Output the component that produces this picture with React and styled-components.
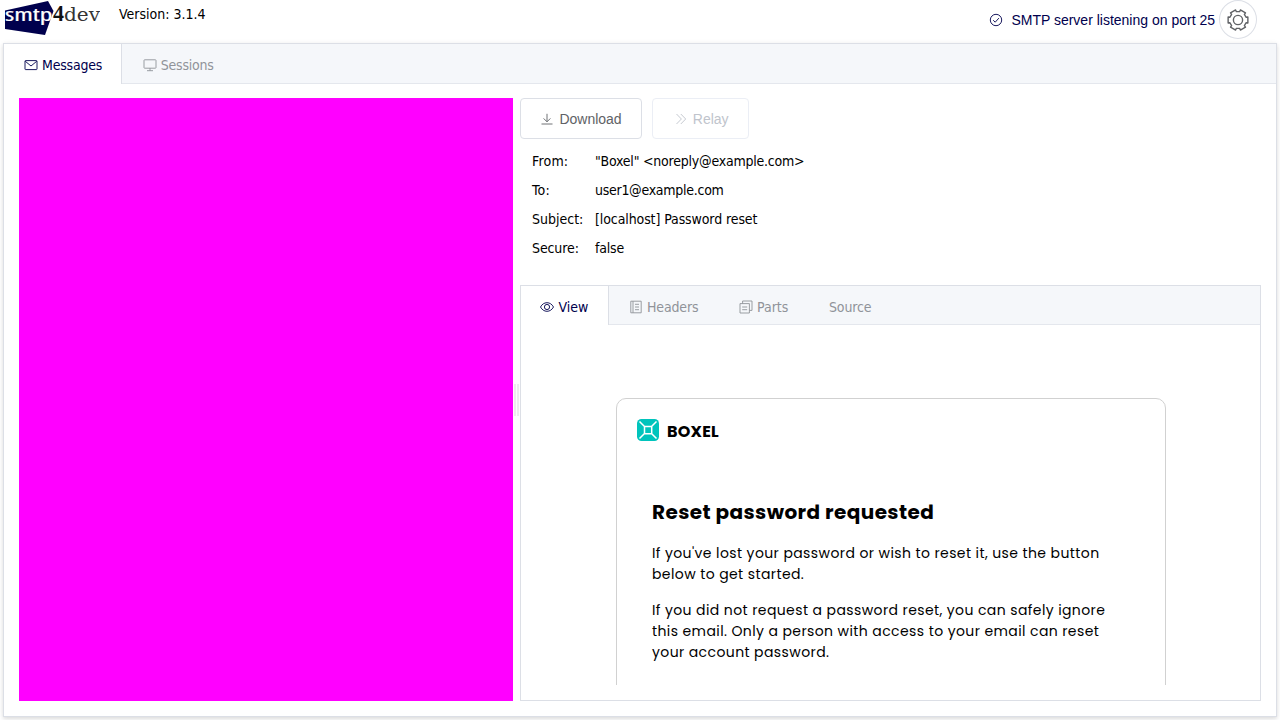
import React from "react";
import styled, { createGlobalStyle } from "styled-components";

const Global = createGlobalStyle`
  * { box-sizing: border-box; }
  html, body { margin: 0; height: 100%; overflow: hidden; background: #fff; }
  body { font-family: Tahoma, "DejaVu Sans Condensed", "DejaVu Sans", sans-serif; font-stretch: condensed; font-size: 14px; color: #000; }
`;

const Page = styled.div`
  height: 720px;
  width: 1280px;
  display: flex;
  flex-direction: column;
  overflow: hidden;
`;

const TopBar = styled.header`
  height: 43px;
  flex: none;
  display: flex;
  align-items: flex-start;
  padding: 0 23px 0 5px;
`;

const Version = styled.span`
  margin: 5px auto 0 19px;
  line-height: 19px;
`;

const Status = styled.div`
  display: flex;
  align-items: center;
  gap: 8.5px;
  height: 39px;
  margin-right: 4px;
  color: #00004d;
  font-family: "Liberation Sans", Arial, sans-serif;
`;

const RoundButton = styled.button`
  width: 38px;
  height: 39px;
  padding: 0;
  border: 1px solid #dcdfe6;
  border-radius: 50%;
  background: #fff;
  color: #606266;
  display: flex;
  align-items: center;
  justify-content: center;
`;

const Panel = styled.main`
  flex: 1;
  margin: 0 3px 3px;
  display: flex;
  flex-direction: column;
  min-height: 0;
  border: 1px solid #dcdfe6;
  background: #fff;
  box-shadow: 0 2px 4px rgba(0, 0, 0, 0.12), 0 0 6px rgba(0, 0, 0, 0.04);
`;

const TabStrip = styled.nav`
  flex: none;
  display: flex;
  height: ${(p) => p.$height}px;
  background: #f5f7fa;
  border-bottom: 1px solid #e4e7ed;
`;

const Tab = styled.div`
  display: flex;
  align-items: center;
  gap: 4px;
  width: ${(p) => p.$width}px;
  height: ${(p) => (p.$active ? "calc(100% + 1px)" : "100%")};
  padding: ${(p) => p.$top || (p.$active ? 3 : 4)}px 0 0 ${(p) => p.$left || 20}px;
  color: ${(p) => (p.$active ? "#00004d" : "#909399")};
  background: ${(p) => (p.$active ? "#fff" : "transparent")};
  border-right: ${(p) => (p.$active ? "1px solid #dcdfe6" : "0")};
  letter-spacing: ${(p) => p.$ls || 0}px;
  white-space: nowrap;
`;

const Split = styled.div`
  flex: 1;
  min-height: 0;
  display: flex;
  padding: 14px 15px 15px;
`;

const ListPane = styled.section`
  width: 494.4px;
  flex: none;
  background: #ff00ff;
`;

const Handle = styled.div`
  width: 6.6px;
  flex: none;
  display: flex;
  align-items: center;
  justify-content: center;
  gap: 1px;
`;

const Grip = styled.i`
  width: 2px;
  height: 32px;
  background: #ededed;
`;

const Detail = styled.section`
  flex: 1;
  min-width: 0;
  display: flex;
  flex-direction: column;
`;

const Actions = styled.div`
  display: flex;
  gap: 10px;
`;

const Button = styled.button`
  width: ${(p) => p.$width}px;
  height: 41px;
  padding: 0 0 0 ${(p) => p.$left}px;
  display: flex;
  align-items: center;
  gap: 5px;
  border: 1px solid ${(p) => (p.disabled ? "#ebeef5" : "#dcdfe6")};
  border-radius: 4px;
  background: #fff;
  color: ${(p) => (p.disabled ? "#c0c4cc" : "#606266")};
  font: 14px "Liberation Sans", Arial, sans-serif;
`;

const Fields = styled.dl`
  margin: 7px 0 0 12px;
  display: grid;
  grid-template-columns: 63px 1fr;
  grid-auto-rows: 29px;
  align-items: center;
`;

const Label = styled.dt`
  letter-spacing: ${(p) => p.$ls || 0}px;
`;

const Value = styled.dd`
  margin: 0;
  letter-spacing: ${(p) => p.$ls || 0}px;
`;

const Viewer = styled.div`
  flex: 1;
  min-height: 0;
  margin-top: 23px;
  border: 1px solid #dcdfe6;
  display: flex;
  flex-direction: column;
`;

const Frame = styled.div`
  flex: 1;
  min-height: 0;
  margin: 15px;
  padding: 58px 80px 0;
  overflow: hidden;
`;

const Mail = styled.article`
  width: 550px;
  height: 420px;
  border: 1px solid #d1d1d1;
  border-radius: 10px;
  padding: 20px 20px 0;
  font-family: Poppins, Inter, "Open Sans", sans-serif;
`;

const Brand = styled.div`
  display: flex;
  align-items: center;
  gap: 8px;
  height: 22px;
  font-weight: 700;
  font-size: 16px;
`;

const BrandName = styled.span`
  padding-top: 2px;
  letter-spacing: ${(p) => p.$ls}px;
`;

const MailTitle = styled.h1`
  margin: 56px 0 0 15px;
  font-size: 20px;
  line-height: 30px;
  font-weight: 700;
  letter-spacing: ${(p) => p.$ls}px;
`;

const Paragraph = styled.p`
  margin: ${(p) => p.$top || 15}px 0 0 15px;
  font-size: 14px;
  line-height: 21px;
  white-space: nowrap;
`;

const Line = styled.span`
  display: block;
  letter-spacing: 0.4px;
`;

const Icon = ({ size = 14, children, w = 0.9 }) => (
  <svg width={size} height={size} viewBox="0 0 14 14" fill="none" stroke="currentColor" strokeWidth={w} style={{ flex: "none" }}>
    {children}
  </svg>
);

const Logo = () => (
  <svg width="95" height="36" viewBox="0 0 95 36">
    <path d="M0 10.5 L43 1 L48.5 11 L40 35 L0 29 Z" fill="#00004d" />
    <text x="0" y="21" fill="#fff" fontFamily="Open Sans" fontSize="18.5" stroke="#fff" strokeWidth=".2" textLength="47.5" lengthAdjust="spacingAndGlyphs">smtp</text>
    <text x="48" y="20.5" fill="#111" fontFamily="Liberation Serif" fontWeight="700" fontSize="23" textLength="11" lengthAdjust="spacingAndGlyphs">4</text>
    <text x="59" y="20.5" fill="#333" fontFamily="DejaVu Serif" fontWeight="200" fontSize="18" textLength="36" lengthAdjust="spacingAndGlyphs">dev</text>
  </svg>
);

const gear = (() => {
  const pts = [];
  for (let i = 0; i < 6; i++) {
    const a = (i * Math.PI) / 3;
    [[-0.33, 8.5], [-0.29, 10.3], [0.29, 10.3], [0.33, 8.5]].forEach(([d, r]) => {
      pts.push(`${(11 + r * Math.cos(a + d)).toFixed(2)},${(11 + r * Math.sin(a + d)).toFixed(2)}`);
    });
  }
  return pts.join(" ");
})();

export default function App() {
  return (
    <Page>
      <Global />
      <TopBar>
        <Logo />
        <Version>Version: 3.1.4</Version>
        <Status>
          <Icon><circle cx="7" cy="7" r="5.7" /><path d="M4.2 7.2 6.2 9.2 9.9 5.1" /></Icon>
          SMTP server listening on port 25
        </Status>
        <RoundButton aria-label="Settings">
          <svg width="22" height="22" viewBox="0 0 22 22" fill="none" stroke="currentColor" strokeWidth="1.4" strokeLinejoin="round">
            <polygon points={gear} />
            <circle cx="11" cy="11" r="4.6" />
          </svg>
        </RoundButton>
      </TopBar>
      <Panel>
        <TabStrip $height={40}>
          <Tab $active $width={118} $top={2} $ls={-0.2}>
            <Icon><rect x="1" y="2.6" width="12" height="9" rx=".6" /><path d="M1.2 3.2 7 8 12.8 3.2" /></Icon>
            Messages
          </Tab>
          <Tab $width={120} $top={3} $left={20.7} $ls={-0.2}>
            <Icon><rect x="1" y="1.8" width="12" height="8.4" rx=".6" /><path d="M7 10.2v2.4M4 12.7h6" /></Icon>
            Sessions
          </Tab>
        </TabStrip>
        <Split>
          <ListPane />
          <Handle><Grip /><Grip /></Handle>
          <Detail>
            <Actions>
              <Button $width={122.5} $left={19.4}>
                <Icon><path d="M7 1.8v8M3.6 6.4 7 9.8l3.4-3.4M1.5 12h11" /></Icon>
                Download
              </Button>
              <Button $width={97} $left={20.3} disabled>
                <Icon><path d="M2.5 2 7.4 7 2.5 12M6.8 2l4.9 5-4.9 5" /></Icon>
                Relay
              </Button>
            </Actions>
            <Fields>
              <Label $ls={0.2}>From:</Label><Value $ls={-0.22}>"Boxel" &lt;noreply@example.com&gt;</Value>
              <Label $ls={0.3}>To:</Label><Value $ls={-0.27}>user1@example.com</Value>
              <Label>Subject:</Label><Value $ls={-0.1}>[localhost] Password reset</Value>
              <Label $ls={-0.1}>Secure:</Label><Value $ls={-0.2}>false</Value>
            </Fields>
            <Viewer>
              <TabStrip $height={39}>
                <Tab $active $width={88} $left={19.5}>
                  <Icon><path d="M.5 7C2 4.2 4.3 2.7 7 2.7S12 4.2 13.5 7C12 9.8 9.7 11.3 7 11.3S2 9.8.5 7Z" /><circle cx="7" cy="7" r="2.6" /></Icon>
                  View
                </Tab>
                <Tab $width={110} $ls={-0.15}>
                  <Icon><path d="M1.8 1.2h10.4v11.6H1.8zM4 1.2v11.6M6 4.3h4M6 7h4M6 9.7h4" /></Icon>
                  Headers
                </Tab>
                <Tab $width={90}>
                  <Icon><path d="M1 3.6h9.4V13H1zM3.6 3.6V1H13v9.4h-2.6M3.2 7h5M3.2 9.7h5" /></Icon>
                  Parts
                </Tab>
                <Tab $width={90} $ls={-0.15}>Source</Tab>
              </TabStrip>
              <Frame>
                <Mail>
                  <Brand>
                    <svg width="22" height="22" viewBox="0 0 22 22" fill="none" stroke="#fff" strokeWidth="1.5">
                      <rect width="22" height="22" rx="4.5" fill="#00c4bc" stroke="none" />
                      <path d="M7.5 7.5h7.2v7.2H7.5zM2.5 2.5l5 5M19.5 2.5l-5 5M2.5 19.5l5-5M19.5 19.5l-5-5" />
                    </svg>
                    <BrandName $ls={0.2}>BOXEL</BrandName>
                  </Brand>
                  <MailTitle $ls={0.4}>Reset password requested</MailTitle>
                  <Paragraph $top={16}>
                    <Line>If you've lost your password or wish to reset it, use the button</Line>
                    <Line>below to get started.</Line>
                  </Paragraph>
                  <Paragraph>
                    <Line>If you did not request a password reset, you can safely ignore</Line>
                    <Line>this email. Only a person with access to your email can reset</Line>
                    <Line>your account password.</Line>
                  </Paragraph>
                </Mail>
              </Frame>
            </Viewer>
          </Detail>
        </Split>
      </Panel>
    </Page>
  );
}
